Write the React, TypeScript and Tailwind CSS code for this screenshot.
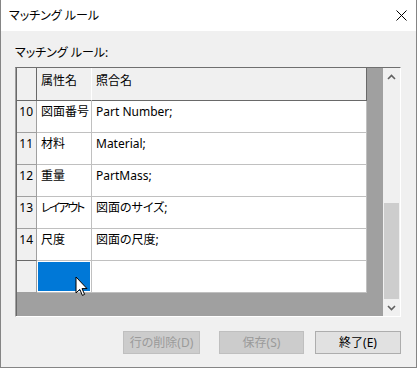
import React from 'react';

const ROWS = [
  { n: 10, attr: '図面番号', match: 'Part Number;', tight: false },
  { n: 11, attr: '材料', match: 'Material;', tight: false },
  { n: 12, attr: '重量', match: 'PartMass;', tight: false },
  { n: 13, attr: 'レイアウト', match: '図面のサイズ;', tight: true },
  { n: 14, attr: '尺度', match: '図面の尺度;', tight: false },
];

const Chevron: React.FC<{ down?: boolean }> = ({ down }) => (
  <svg width="9" height="6" viewBox="0 0 9 6" className={down ? 'rotate-180' : ''}>
    <path d="M1 5 L4.5 1.5 L8 5" fill="none" stroke="#606060" strokeWidth="1.6" />
  </svg>
);

const App: React.FC = () => {
  return (
    <div className="relative w-[417px] h-[368px] flex flex-col bg-[#f0f0f0] border-l border-r border-b border-[#858585] text-[12px] leading-4 text-black font-['Noto_Sans','Noto_Sans_CJK_JP',sans-serif] [font-feature-settings:'palt']">
      {/* Title bar */}
      <div className="h-[31px] bg-white flex items-center justify-between pl-[8px] pr-[9px] shrink-0">
        <span>マッチング ルール</span>
        <svg width="11" height="11" viewBox="0 0 11 11">
          <path d="M0.5 0.5 L10.5 10.5 M10.5 0.5 L0.5 10.5" stroke="#000" strokeWidth="1" />
        </svg>
      </div>

      <div className="flex-1 flex flex-col pl-[14px] pr-[15px] pt-[14px]">
        <div className="mb-[6px]">マッチング ルール:</div>

        {/* Grid */}
        <div className="w-[386px] h-[250px] flex border border-t-[#6f6f6f] border-l-[#a0a0a0] border-r-white border-b-white">
          <div className="flex-1 flex flex-col bg-[#a0a0a0] border-l border-[#696969]">
            {/* Header row */}
            <div className="flex h-[33px] shrink-0">
              <div className="w-[20px] bg-[#f0f0f0] border-r border-b border-[#696969]" />
              <div className="w-[55px] bg-[#f0f0f0] border-r border-r-white border-b border-b-[#696969] pl-[4px] pt-[5px]">属性名</div>
              <div className="w-[275px] bg-[#f0f0f0] border-r border-b border-[#696969] pl-[4px] pt-[5px]">照合名</div>
            </div>

            {ROWS.map((r, i) => (
              <div key={r.n} className="flex h-[32px] shrink-0">
                <div className={`w-[20px] bg-[#f0f0f0] border-r border-r-[#a0a0a0] border-b text-right pr-[3px] pt-[3px] ${i === ROWS.length - 1 ? 'border-b-[#696969]' : 'border-b-[#a0a0a0]'}`}>
                  {r.n}
                </div>
                <div className={`w-[55px] bg-white border-r border-b border-[#c0c0c0] pl-[4px] pt-[3px] whitespace-nowrap overflow-hidden ${r.tight ? 'tracking-[-2px]' : ''}`}>{r.attr}</div>
                <div className="w-[275px] bg-white border-r border-b border-[#c0c0c0] pl-[4px] pt-[3px] whitespace-nowrap">{r.match}</div>
              </div>
            ))}

            {/* New row */}
            <div className="flex h-[32px] shrink-0">
              <div className="w-[20px] bg-[#f0f0f0] border-r border-b border-[#a0a0a0]" />
              <div className="w-[55px] bg-white border-r border-b border-[#c0c0c0] p-[1px]">
                <div className="w-full h-full bg-[#0078d7]" />
              </div>
              <div className="w-[275px] bg-white border-r border-b border-[#c0c0c0]" />
            </div>
          </div>

          {/* Scrollbar */}
          <div className="w-[17px] flex flex-col bg-[#f0f0f0]">
            <div className="h-[17px] flex items-center justify-center">
              <Chevron />
            </div>
            <div className="flex-1 flex flex-col justify-end px-[1px]">
              <div className="h-[96px] bg-[#cdcdcd]" />
            </div>
            <div className="h-[17px] flex items-center justify-center">
              <Chevron down />
            </div>
          </div>
        </div>

        {/* Buttons */}
        <div className="flex justify-end mt-[14px]">
          <button className="w-[77px] h-[23px] bg-[#cccccc] border border-[#bfbfbf] text-[#9a9a9a]">行の削除(D)</button>
          <button className="w-[85px] h-[23px] ml-[19px] bg-[#cccccc] border border-[#bfbfbf] text-[#9a9a9a]">保存(S)</button>
          <button className="w-[86px] h-[23px] ml-[11px] bg-[#e1e1e1] border border-[#adadad] text-black">終了(E)</button>
        </div>
      </div>

      {/* Mouse cursor */}
      <svg className="absolute left-[74px] top-[276px]" width="13" height="21" viewBox="0 0 13 21">
        <path d="M1 1 L1 17 L4.8 13.4 L7.4 19.4 L9.6 18.4 L7 12.6 L12 12.6 Z" fill="#fff" stroke="#000" strokeWidth="1" strokeLinejoin="miter" />
      </svg>
    </div>
  );
};

export default App;
